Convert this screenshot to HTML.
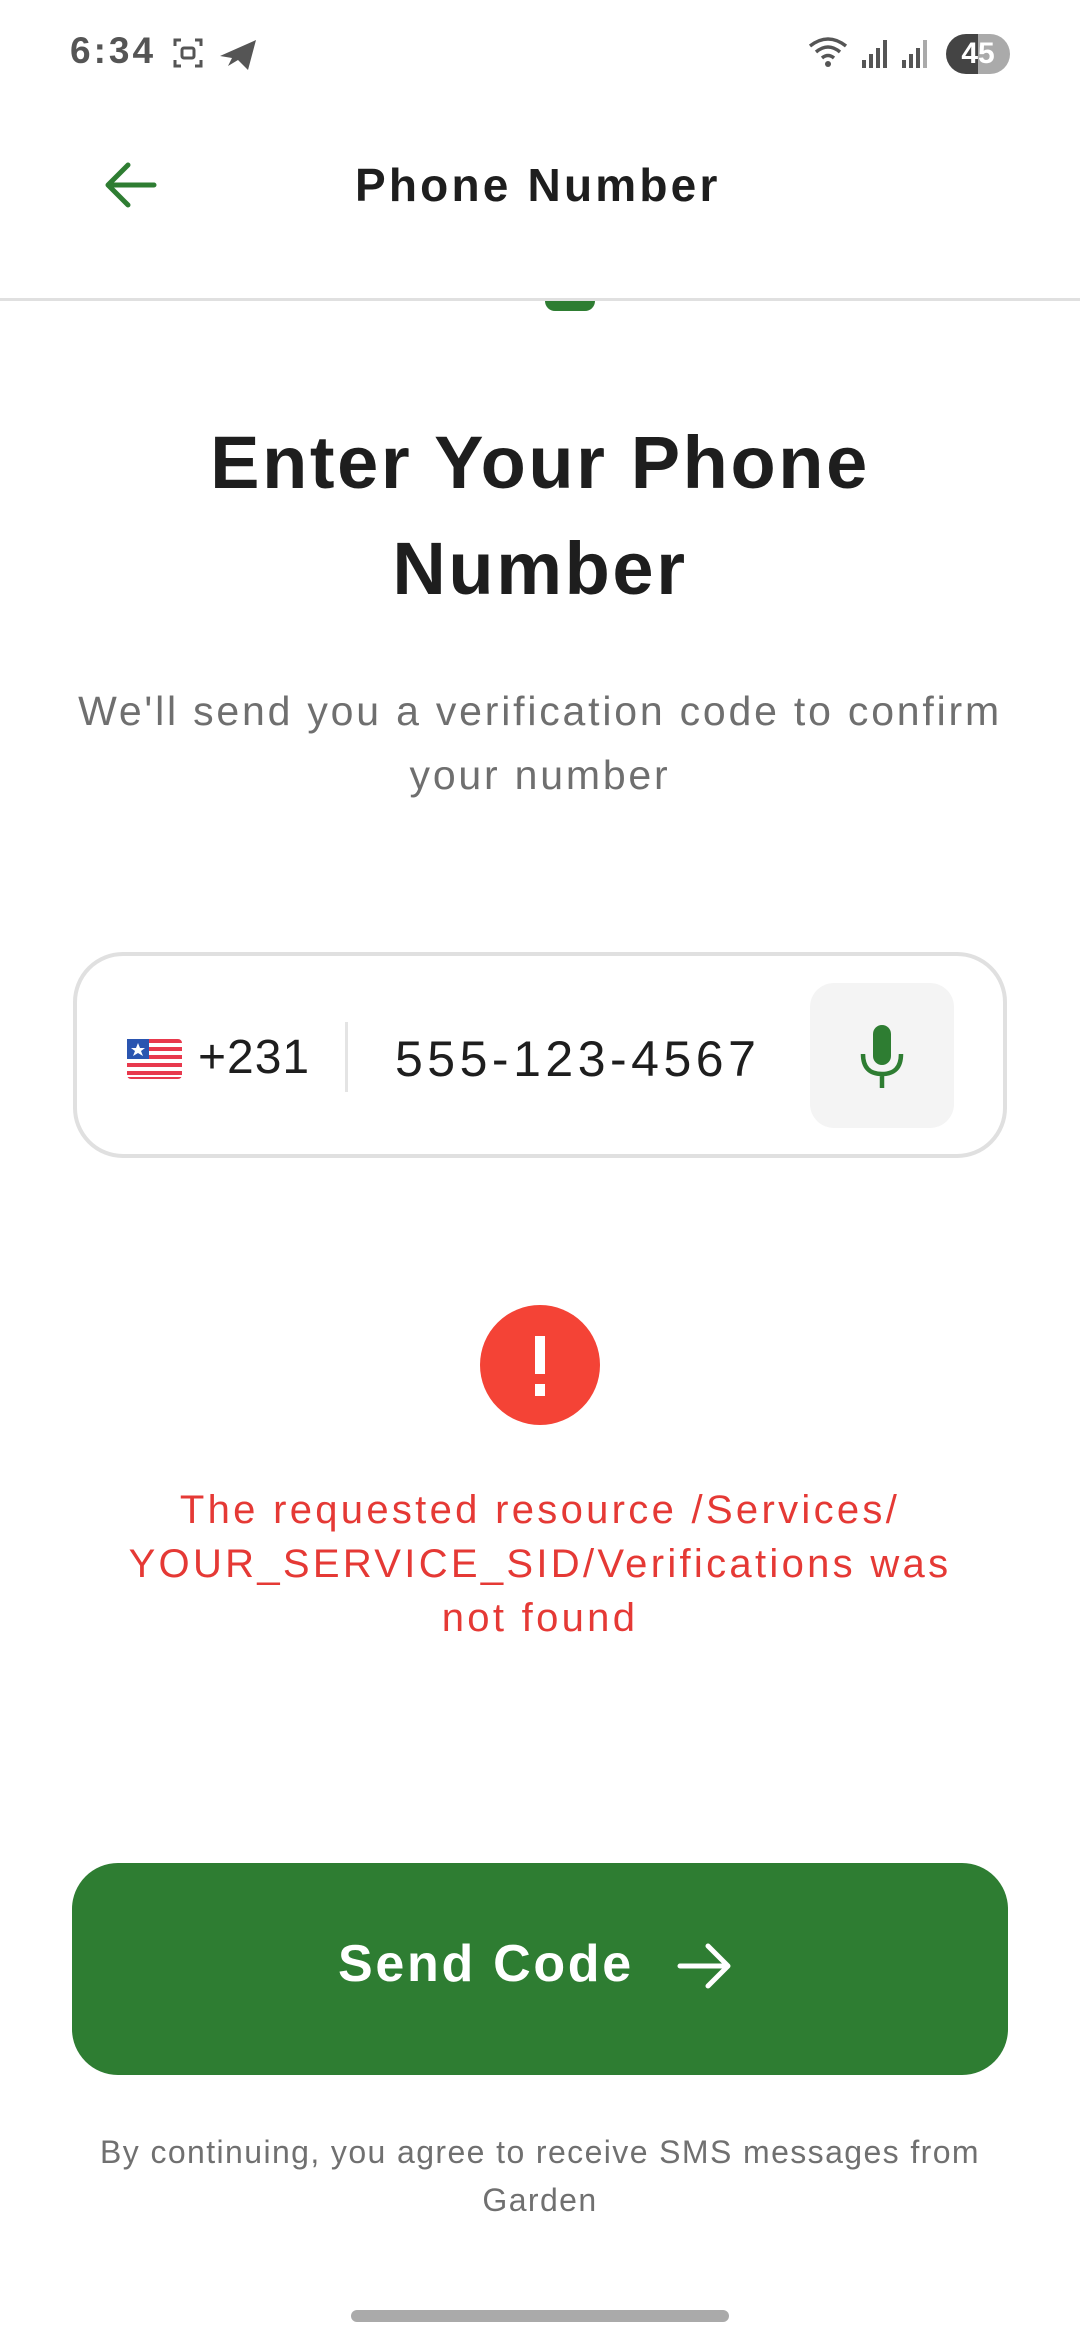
<!DOCTYPE html>
<html><head><meta charset="utf-8"><style>
*{margin:0;padding:0;box-sizing:border-box}
body{width:1080px;height:2340px;background:#fff;position:relative;overflow:hidden;font-family:"Liberation Sans",sans-serif}
.a{position:absolute}
.c{left:0;width:1080px;text-align:center}
</style></head><body>
<div class="a" style="left:70px;top:30px;font-size:37px;font-weight:bold;color:#555;letter-spacing:3px">6:34</div>
<svg class="a" style="left:172px;top:36px" width="90" height="38" viewBox="0 0 90 38">
<path d="M3 10V4h6M23 4h6v6M29 24v6h-6M9 30H3v-6" fill="none" stroke="#555" stroke-width="3"/>
<rect x="10" y="12" width="12" height="10" rx="2" fill="none" stroke="#555" stroke-width="3"/>
<path d="M48 20L84 4L76 34L66 24L56 30L60 22Z" fill="#555"/>
</svg>
<svg class="a" style="left:808px;top:34px" width="130" height="40" viewBox="0 0 130 40">
<path d="M2 12Q20 -2 38 12M8 18Q20 8 32 18M14 24Q20 19 26 24" fill="none" stroke="#555" stroke-width="3.5"/>
<circle cx="20" cy="30" r="3" fill="#555"/>
<rect x="54" y="26" width="4" height="8" fill="#555"/><rect x="61" y="20" width="4" height="14" fill="#555"/><rect x="68" y="14" width="4" height="20" fill="#555"/><rect x="75" y="6" width="4" height="28" fill="#555"/>
<rect x="94" y="26" width="4" height="8" fill="#555"/><rect x="101" y="20" width="4" height="14" fill="#555"/><rect x="108" y="14" width="4" height="20" fill="#555"/><rect x="115" y="6" width="4" height="28" fill="#aaa"/>
</svg>
<div class="a" style="left:946px;top:34px;width:64px;height:40px;border-radius:20px;background:linear-gradient(90deg,#444 50%,#aaa 50%);color:#fff;font-weight:bold;font-size:30px;text-align:center;line-height:40px">45</div>

<svg class="a" style="left:100px;top:160px" width="60" height="50" viewBox="0 0 60 50">
<path d="M54 25H8M28 5L8 25L28 45" fill="none" stroke="#2e7d32" stroke-width="5" stroke-linecap="round" stroke-linejoin="round"/>
</svg>
<div class="a" style="left:355px;top:158px;font-size:46px;font-weight:bold;color:#1e1e1e;letter-spacing:3.2px">Phone Number</div>
<div class="a" style="left:0;top:298px;width:1080px;height:3px;background:#e0e0e0"></div>
<div class="a" style="left:545px;top:301px;width:50px;height:10px;background:#2e7d32;border-radius:0 0 25px 25px"></div>

<div class="a c" style="top:410px;font-size:74px;font-weight:bold;color:#1e1e1e;line-height:106px;letter-spacing:2.6px">Enter Your Phone<br>Number</div>
<div class="a c" style="top:679px;font-size:41px;color:#6f6f6f;line-height:64px;letter-spacing:2.8px">We'll send you a verification code to confirm<br>your number</div>

<div class="a" style="left:73px;top:952px;width:934px;height:206px;border:4px solid #e0e0e0;border-radius:50px"></div>
<svg class="a" style="left:127px;top:1039px" width="55" height="40" viewBox="0 0 55 40">
<rect width="55" height="40" rx="4" fill="#e8394d"/>
<g fill="#fff"><rect y="4" width="55" height="4"/><rect y="12" width="55" height="4"/><rect y="20" width="55" height="4"/><rect y="28" width="55" height="4"/><rect y="36" width="55" height="2"/></g>
<rect width="22" height="20" fill="#2a55b0"/><path d="M11 4l2 5h5l-4 3 2 5-5-3-5 3 2-5-4-3h5z" fill="#fff"/>
</svg>
<div class="a" style="left:198px;top:1030px;font-size:48px;color:#1e1e1e;letter-spacing:1px">+231</div>
<div class="a" style="left:345px;top:1022px;width:3px;height:70px;background:#e4e4e4"></div>
<div class="a" style="left:395px;top:1030px;font-size:50px;color:#1e1e1e;letter-spacing:4.5px">555-123-4567</div>
<div class="a" style="left:810px;top:983px;width:144px;height:145px;background:#f4f4f4;border-radius:24px"></div>
<svg class="a" style="left:858px;top:1022px" width="48" height="68" viewBox="0 0 48 68">
<rect x="15" y="3" width="18" height="40" rx="9" fill="#2e7d32"/>
<path d="M5 32Q5 52 24 52Q43 52 43 32M24 52V66" fill="none" stroke="#2e7d32" stroke-width="4.5"/>
</svg>

<div class="a" style="left:480px;top:1305px;width:120px;height:120px;border-radius:50%;background:#f44336"></div>
<div class="a" style="left:535px;top:1336px;width:10px;height:38px;background:#fff"></div>
<div class="a" style="left:535px;top:1384px;width:10px;height:12px;background:#fff"></div>
<div class="a c" style="top:1483px;font-size:40px;color:#e53935;line-height:54px;letter-spacing:3.3px">The requested resource /Services/<br>YOUR_SERVICE_SID/Verifications was<br>not found</div>

<div class="a" style="left:72px;top:1863px;width:936px;height:212px;background:#2e7d32;border-radius:46px"></div>
<div class="a" style="left:338px;top:1934px;font-size:52px;font-weight:bold;color:#fff;letter-spacing:2.7px">Send Code</div>
<svg class="a" style="left:676px;top:1940px" width="58" height="52" viewBox="0 0 58 52">
<path d="M4 26H52M32 6L52 26L32 46" fill="none" stroke="#fff" stroke-width="5" stroke-linecap="round" stroke-linejoin="round"/>
</svg>
<div class="a c" style="top:2128px;font-size:32px;color:#707070;line-height:48px;letter-spacing:1.4px">By continuing, you agree to receive SMS messages from<br>Garden</div>
<div class="a" style="left:351px;top:2310px;width:378px;height:12px;border-radius:6px;background:#aaa"></div>
</body></html>
